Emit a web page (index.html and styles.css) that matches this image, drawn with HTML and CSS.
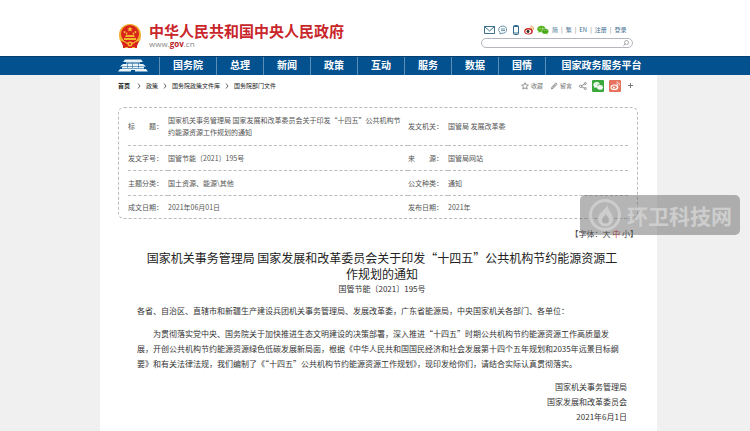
FILE: index.html
```html
<!DOCTYPE html>
<html lang="zh-CN">
<head>
<meta charset="utf-8">
<title>关于印发“十四五”公共机构节约能源资源工作规划的通知</title>
<link rel="stylesheet" href="styles.css">
</head>
<body>
<header class="header wrap">
  <a class="brand" href="#">
    <svg class="emblem" viewBox="0 0 24 26" aria-hidden="true">
      <path d="M12 1C5 1 1 6 1 12c0 4 1 7 4 9l1 4h12l1-4c3-2 4-5 4-9C23 6 19 1 12 1z" fill="#efae2c"/>
      <circle cx="12" cy="11" r="9" fill="#d9231c"/>
      <path d="M12 3.500l.8 1.700 1.900.2-1.400 1.300.4 1.900-1.700-.9-1.700.9.4-1.900-1.400-1.300 1.900-.2z" fill="#f9c834"/>
      <g fill="#f9c834"><circle cx="6.500" cy="9" r=".9"/><circle cx="8.500" cy="10.500" r=".9"/><circle cx="15.500" cy="10.500" r=".9"/><circle cx="17.500" cy="9" r=".9"/></g>
      <path d="M8 12h8l1 2H7zM6 15h12v2H6z" fill="#f4b52c"/>
      <path d="M3 18q4 1 6 3h6q2-2 6-3l-2 5v2H5v-2z" fill="#d9231c"/>
      <path d="M7 24h3v1H7zM14 24h3v1h-3z" fill="#f4b52c"/>
      <circle cx="12" cy="21" r="2.500" fill="#f4b52c"/><circle cx="12" cy="21" r="1" fill="#d9231c"/>
    </svg>
    <span class="brand-text">
      <span class="brand-name">中华人民共和国中央人民政府</span>
      <span class="brand-url">www.<b>gov</b>.cn</span>
    </span>
  </a>
  <div class="tools">
    <div class="links">
      <a href="#" aria-label="邮箱"><svg class="mail" viewBox="0 0 11 8"><path d="M.5.5h10v7H.5zL5.500 5l5-4.500" fill="none" stroke="#3f7190"/></svg></a>
      <a href="#" aria-label="互动"><svg class="ico" viewBox="0 0 10 10"><path d="M5 1a4 3.600 0 1 1-1 7.200L2 9V7.300A4 3.600 0 0 1 5 1zM3 4h4M3 5.600h4" fill="none" stroke="#4a7b98" stroke-width=".8"/></svg></a>
      <a href="#" aria-label="客户端"><svg class="phone" viewBox="0 0 6 10"><rect x=".5" y=".5" width="5" height="9" rx="1" fill="#fff" stroke="#326a8d"/><path d="M.5 1.500h5M.5 8h5" stroke="#326a8d"/></svg></a>
      <a href="#" aria-label="微博"><svg class="ico" viewBox="0 0 10 10"><ellipse cx="4.500" cy="6.300" rx="4.300" ry="3.200" fill="#c92a27"/><ellipse cx="4.300" cy="6.400" rx="2.900" ry="2" fill="#fff"/><circle cx="4" cy="6.500" r="1.400" fill="#222"/><path d="M6.500 1a3 3 0 0 1 3 3.500M6.500 2.600a1.400 1.400 0 0 1 1.400 1.600" fill="none" stroke="#e58a2b" stroke-width=".9"/></svg></a>
      <a href="#" aria-label="微信"><svg class="wechat" viewBox="0 0 12 10"><path d="M4.500.8C2 .8.2 2.200.2 4c0 1 .6 1.900 1.500 2.500L1.300 8l1.700-.9 1.500.2C7 7.300 8.700 5.900 8.700 4S7 .8 4.500.8z" fill="#57b51e"/><path d="M8.200 3.600c-2 0-3.500 1.200-3.500 2.800S6.200 9.100 8.200 9.100l1.200-.2 1.400.8-.4-1.300c.8-.5 1.300-1.200 1.300-2 0-1.600-1.500-2.800-3.500-2.800z" fill="#49a919" stroke="#fff" stroke-width=".4"/><g fill="#fff"><circle cx="3" cy="3.200" r=".5"/><circle cx="5.700" cy="3.200" r=".5"/><circle cx="7.200" cy="5.700" r=".4"/><circle cx="9.300" cy="5.700" r=".4"/></g></svg></a>
      <span class="langs"><a href="#">简</a><i>|</i><a href="#">繁</a><i>|</i><a href="#">EN</a><i>|</i><a href="#">注册</a><i>|</i><a href="#">登录</a></span>
    </div>
    <form class="search">
      <input type="search" aria-label="搜索">
      <button type="submit" aria-label="搜索"><svg viewBox="0 0 6 6"><circle cx="3.500" cy="2.500" r="2" fill="none" stroke="#888" stroke-width=".7"/><path d="M2 4L.4 5.700" stroke="#888" stroke-width=".8"/></svg></button>
    </form>
  </div>
</header>

<nav class="nav">
  <div class="wrap nav-inner">
    <a class="nav-home" href="#" aria-label="首页"><svg viewBox="0 0 30 14" fill="#e9f3f8"><path d="M7 1.500h16l2 2.500H5zM8 4.500h14v1H8zM5 6h20l3 2.500H2zM4 9h22v1.500H4zM2 11h11v2.500H0zM17 11h11l2 2.500H17zM13 11h4v1h-4z"/><path d="M9 5h1v5H9zM14 5h1v5h-1zM20 5h1v5h-1z" fill="#03518f" opacity=".5"/></svg></a>
    <a href="#">国务院</a>
    <a href="#">总理</a>
    <a href="#">新闻</a>
    <a href="#">政策</a>
    <a href="#">互动</a>
    <a href="#">服务</a>
    <a href="#">数据</a>
    <a href="#">国情</a>
    <a class="nav-service" href="#">国家政务服务平台</a>
  </div>
</nav>

<div class="wrap">
<main class="page">
  <div class="bar">
    <div class="crumbs">
      <a class="first" href="#">首页</a><svg viewBox="0 0 4 6"><path d="M1 .5L3 3 1 5.500"/></svg><a href="#">政策</a><svg viewBox="0 0 4 6"><path d="M1 .5L3 3 1 5.500"/></svg><a href="#">国务院政策文件库</a><svg viewBox="0 0 4 6"><path d="M1 .5L3 3 1 5.500"/></svg><a href="#">国务院部门文件</a>
    </div>
    <div class="share">
      <button type="button"><svg class="small" viewBox="0 0 8 8"><path d="M4 .7l1 2.200 2.400.2-1.800 1.600.5 2.400L4 5.900 1.900 7.100l.5-2.400L.6 3.100 3 2.900z"/></svg>收藏</button>
      <button type="button"><svg class="small" viewBox="0 0 8 8"><path d="M1.500 7l.4-2L5.700.9l1.400 1.300-3.800 4zM2.800 5.500l3-3"/></svg>留言</button>
      <button type="button" aria-label="分享"><svg class="small" viewBox="0 0 8 8"><circle cx="1.700" cy="4.300" r="1.200"/><circle cx="6.300" cy="1.500" r="1"/><circle cx="6.300" cy="6.500" r="1"/><path d="M2.700 3.700l2.700-1.600M2.700 4.800l2.700 1.300"/></svg></button>
      <button class="tile green" type="button" aria-label="分享到微信"><svg viewBox="0 0 12 12"><path d="M5 2C2.800 2 1.300 3.300 1.300 4.800c0 .9.400 1.600 1.200 2.100L2.200 8l1.300-.6 1.500.2a3 3 0 0 1 3-3.300C7.700 3 6.600 2 5 2z" fill="#fff"/><ellipse cx="8" cy="7.300" rx="2.900" ry="2.400" fill="#fff"/><path d="M9 9l1.300 1-.2-1.700z" fill="#fff"/><g fill="#3aa83c"><circle cx="3.800" cy="4" r=".5"/><circle cx="6" cy="4" r=".5"/><circle cx="7" cy="6.800" r=".4"/><circle cx="9" cy="6.800" r=".4"/></g></svg></button>
      <button class="tile red" type="button" aria-label="分享到微博"><svg viewBox="0 0 12 12"><ellipse cx="5.400" cy="7.200" rx="3.900" ry="2.800" fill="#fff"/><ellipse cx="5.200" cy="7.300" rx="2.500" ry="1.700" fill="#e5735f"/><circle cx="4.900" cy="7.400" r="1" fill="#fff"/><path d="M7.500 2a2.800 2.800 0 0 1 2.800 3.300M7.500 3.700a1.200 1.200 0 0 1 1.200 1.500" fill="none" stroke="#fff" stroke-width=".8"/></svg></button>
      <button type="button" aria-label="更多"><svg class="plus" viewBox="0 0 5 5"><path d="M2.500 0v5M0 2.500h5"/></svg></button>
    </div>
  </div>

  <div class="meta">
    <table>
      <colgroup><col class="key"><col><col class="key"><col class="last"></colgroup>
      <tr class="tall"><th scope="row">标　　题：</th><td>国家机关事务管理局 国家发展和改革委员会关于印发“十四五”公共机构节<br>约能源资源工作规划的通知</td><th scope="row">发文机关：</th><td>国管局 发展改革委</td></tr>
      <tr><th scope="row">发文字号：</th><td>国管节能〔2021〕195号</td><th scope="row">来　　源：</th><td>国管局网站</td></tr>
      <tr><th scope="row">主题分类：</th><td>国土资源、能源\其他</td><th scope="row">公文种类：</th><td>通知</td></tr>
      <tr><th scope="row">成文日期：</th><td>2021年06月01日</td><th scope="row">发布日期：</th><td>2021年</td></tr>
    </table>
  </div>

  <div class="sizes">【字体：<a href="#">大</a> <a class="current" href="#">中</a> <a href="#">小</a>】</div>

  <article class="article">
    <h1>国家机关事务管理局 国家发展和改革委员会关于印发“十四五”公共机构节约能源资源工<br>作规划的通知</h1>
    <p class="number">国管节能〔2021〕195号</p>
    <p>各省、自治区、直辖市和新疆生产建设兵团机关事务管理局、发展改革委，广东省能源局，中央国家机关各部门、各单位：</p>
    <p class="indent">为贯彻落实党中央、国务院关于加快推进生态文明建设的决策部署，深入推进“十四五”时期公共机构节约能源资源工作高质量发<br>展，开创公共机构节约能源资源绿色低碳发展新局面，根据《中华人民共和国国民经济和社会发展第十四个五年规划和2035年远景目标纲<br>要》和有关法律法规，我们编制了《“十四五”公共机构节约能源资源工作规划》，现印发给你们，请结合实际认真贯彻落实。</p>
    <p class="sign">国家机关事务管理局<br>国家发展和改革委员会<br>2021年6月1日</p>
  </article>
</main>
</div>

<div class="watermark">
  <svg viewBox="0 0 34 34"><circle cx="17" cy="17" r="14.500" fill="none" stroke="#cdcdcd" stroke-width="3"/><path d="M19 6c0 6-9 8-9 15a7.500 7.500 0 0 0 15 0c0-6-5-8-6-15z" fill="#cdcdcd"/><path d="M18 15c0 3-4 4-4 7a3.500 3.500 0 0 0 7 0c0-3-3-4-3-7z" fill="#adadad"/></svg>
  <span>环卫科技网</span>
</div>
</body>
</html>
```
FILE: styles.css
```css
* { box-sizing: border-box; }
body {
  margin: 0;
  background: #f0f0f0;
  color: #444;
  font: 8px/15px "Noto Sans CJK SC", sans-serif;
}
a { color: inherit; text-decoration: none; }
svg { display: block; flex: none; }
button { display: flex; align-items: center; padding: 0; border: 0; background: none; color: inherit; font: inherit; }
.wrap { padding: 0 93px 0 100px; }

.header { display: flex; justify-content: space-between; height: 56px; background: #fff; }
.brand { display: flex; gap: 7px; padding: 23px 0 0 18px; }
.emblem { width: 24px; height: 26px; }
.brand-text { display: flex; flex-direction: column; }
.brand-name { color: #c9262b; font-size: 15px; line-height: 16px; font-weight: 700; }
.brand-url { color: #888; font: 8px/10px "Open Sans", sans-serif; }
.brand-url b { color: #b8242a; }
.tools { width: 176px; padding: 24px 24px 0 0; }
.links { display: flex; align-items: center; gap: 3px; height: 11px; padding-left: 3px; white-space: nowrap; }
.mail { width: 11px; height: 8px; }
.ico { width: 10px; height: 10px; }
.phone { width: 6px; height: 10px; margin: 0 2px; }
.wechat { width: 12px; height: 10px; }
.langs { display: flex; gap: 3px; color: #3f6d8e; font-size: 6px; line-height: 10px; }
.langs i { color: #777; font-style: normal; }
.search { display: flex; align-items: center; height: 10px; margin-top: 3px; padding-right: 3px; border: 1px solid #b5b5bd; border-radius: 5px; }
.search input { flex: 1; min-width: 0; height: 8px; padding: 0 4px; border: 0; background: none; font-size: 6px; outline: 0; appearance: none; }
.search svg { width: 6px; height: 6px; }

.nav { background: #03518f; border-top: 1px solid #034071; }
.nav-inner {
  display: grid; grid-template-columns: 59fr 57fr repeat(7, 47fr) 112fr;
  height: 18px; color: #fff; font-size: 10px; line-height: 16px; font-weight: 700; text-align: center;
}
.nav-inner a { border-left: 1px solid #5c8fb8; white-space: nowrap; }
.nav-inner .nav-home { padding: 1px 0 0 18px; border: 0; }
.nav-home svg { width: 30px; height: 14px; }

.page { min-height: 356px; padding: 0 19px 0 18px; background: #fff; }
.bar { display: flex; justify-content: space-between; align-items: center; height: 21px; font-size: 6px; line-height: 10px; }
.crumbs, .share { display: flex; align-items: center; }
.crumbs { gap: 5px; color: #222; }
.crumbs .first { font-weight: 700; margin-right: 2px; }
.crumbs svg { width: 4px; height: 6px; fill: none; stroke: #666; stroke-width: 1; }
.share { gap: 7px; color: #777; padding-right: 5px; }
.share button { gap: 2px; }
.small { width: 8px; height: 8px; fill: none; stroke: #777; stroke-width: .8; }
.share .tile { width: 12px; height: 12px; border-radius: 1px; margin-left: -2px; }
.tile svg { width: 12px; height: 12px; }
.green { background: #3aa83c; }
.red { background: #e5735f; }
.plus { width: 5px; height: 5px; stroke: #777; }

.meta { margin-top: 11px; padding: 0 9px; border: 1px dashed #bbb; border-radius: 6px; }
table { width: 100%; border-collapse: collapse; table-layout: fixed; font-size: 7px; line-height: 12px; color: #555; }
.key { width: 40px; }
.last { width: 180px; }
th, td { height: 25px; padding: 0; font-weight: 400; text-align: left; white-space: nowrap; border-bottom: 1px dashed #bbb; }
.tall th, .tall td { height: 37px; }
tr:last-child th, tr:last-child td { border-bottom: 0; height: 23px; }

.sizes { margin-top: 7px; text-align: right; line-height: 15px; white-space: nowrap; }
.sizes .current { color: #c33; }

.article { padding: 9px 11px 0 19px; color: #333; }
h1 { margin: 0; color: #222; font-size: 12px; line-height: 16px; font-weight: 400; text-align: center; white-space: nowrap; }
p { margin: 0 0 8px; white-space: nowrap; }
.number { line-height: 13px; text-align: center; }
.indent { text-indent: 2em; }
.sign { text-align: right; }

.watermark {
  position: absolute; top: 195px; right: 10px;
  display: flex; align-items: center; gap: 5px;
  height: 40px; padding: 0 8px;
  border-radius: 5px; background: rgba(90, 90, 90, .45);
  color: #cdcdcd; font-size: 21px; line-height: 40px; font-weight: 700;
}
.watermark svg { width: 34px; height: 34px; }
```
